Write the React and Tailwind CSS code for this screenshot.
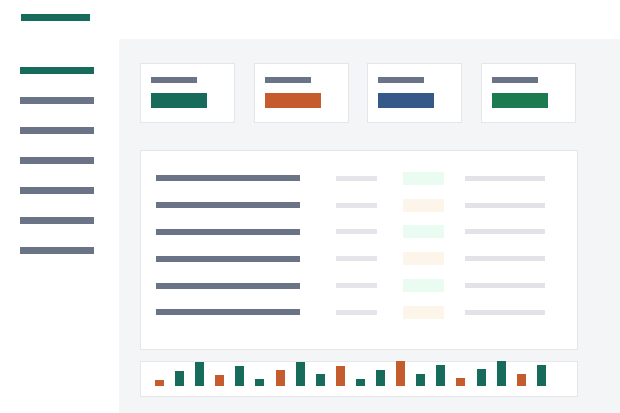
import React from 'react';

const navItems = ['active', 'a', 'b', 'c', 'd', 'e', 'f'];

const stats = [
  { key: 'users', color: 'bg-[#176b5b]' },
  { key: 'orders', color: 'bg-[#c45c2e]' },
  { key: 'revenue', color: 'bg-[#355a8a]' },
  { key: 'growth', color: 'bg-[#1b7a4f]' },
];

// status pill tints alternate ok / pending
const rows = [0, 1, 2, 3, 4, 5];

// bar heights for the activity strip; every third bar is the accent colour
const bars = [6, 15, 24, 11, 20, 7, 16, 24, 12, 20, 7, 16, 25, 12, 21, 8, 17, 25, 12, 21];

function StatCard({ color }) {
  return (
    <div className="h-[60px] w-[95px] shrink-0 border border-[#e4e6ea] bg-white pl-[10px] pt-[13px]">
      <div className="h-[6px] w-[46px] bg-[#6b7387]" />
      <div className={`mt-[10px] h-[15px] w-[56px] ${color}`} />
    </div>
  );
}

function TableRow({ index }) {
  const pill = index % 2 === 0 ? 'bg-[#eafbf1]' : 'bg-[#fdf5e9]';
  return (
    <div className="flex h-[26.8px] items-center">
      <div className="h-[6px] w-[144px] bg-[#6b7387]" />
      <div className="ml-[36px] h-[5px] w-[41px] bg-[#e3e5ea]" />
      <div className={`ml-[26px] h-[13px] w-[41px] ${pill}`} />
      <div className="ml-[21px] h-[5px] w-[80px] bg-[#e1e3e9]" />
    </div>
  );
}

export default function App() {
  return (
    <div className="flex h-[413px] w-[620px] overflow-hidden bg-white">
      {/* sidebar */}
      <aside className="w-[119px] shrink-0 pl-5 pt-[14px]">
        <div className="ml-[1px] h-[7px] w-[69px] bg-[#176b5b]" />
        <nav className="mt-[46px] flex flex-col gap-[23px]">
          {navItems.map((item, i) => (
            <div
              key={item}
              className={`h-[7px] w-[74px] ${i === 0 ? 'bg-[#176b5b]' : 'bg-[#6b7387]'}`}
            />
          ))}
        </nav>
      </aside>

      {/* content */}
      <main className="mt-[39px] flex-1 bg-[#f4f5f7] pl-[21px] pt-[24px]">
        <div className="flex gap-[18.7px]">
          {stats.map((s) => (
            <StatCard key={s.key} color={s.color} />
          ))}
        </div>

        <div className="mt-[27px] h-[200px] w-[438px] border border-[#e4e6ea] bg-white pl-[15px] pt-[14px]">
          {rows.map((r) => (
            <TableRow key={r} index={r} />
          ))}
        </div>

        <div className="mt-[11px] flex h-[36px] w-[438px] items-end gap-[11.1px] border border-[#e4e6ea] bg-white pb-[10px] pl-[14px]">
          {bars.map((h, i) => (
            <div
              key={i}
              className={`w-[9px] ${i % 3 === 0 ? 'bg-[#c45c2e]' : 'bg-[#176b5b]'}`}
              style={{ height: h }}
            />
          ))}
        </div>
      </main>
    </div>
  );
}
